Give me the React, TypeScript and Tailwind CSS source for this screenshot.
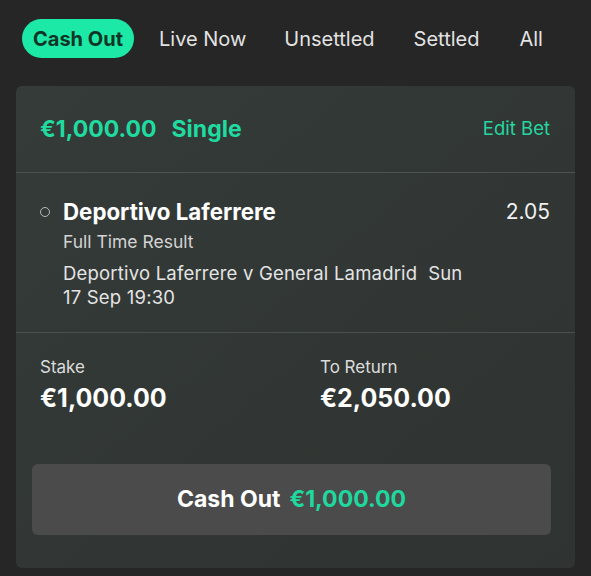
export default function App() {
  return (
    <div className="h-[576px] w-[591px] overflow-hidden bg-[#262626] font-['Inter',sans-serif] text-white">
      {/* Filter tabs */}
      <div className="flex items-center px-[22px] pt-[19px]">
        <div className="flex h-[39px] items-center rounded-full bg-[#1de9a6] px-[11px] text-[20px] font-bold text-[#0f3526]">
          Cash Out
        </div>
        <div className="ml-[25px] flex text-[20px] text-[#e2e2e2]">
          <span>Live Now</span>
          <span className="ml-[38px]">Unsettled</span>
          <span className="ml-[39px]">Settled</span>
          <span className="ml-[40px]">All</span>
        </div>
      </div>

      {/* Bet card */}
      <div className="mx-[16px] mt-[28px] flex h-[482px] flex-col rounded-[6px] bg-gradient-to-br from-[#343b38] to-[#2f3331]">
        <div className="flex h-[86px] items-center justify-between pl-[24px] pr-[25px]">
          <div className="flex gap-[15px] text-[23px] font-bold text-[#1fdba0]">
            <span>€1,000.00</span>
            <span>Single</span>
          </div>
          <span className="text-[18.5px] text-[#25d6a0]">Edit Bet</span>
        </div>
        <div className="h-[1px] bg-[#4d5351]" />

        <div className="flex pl-[24px] pr-[25px] pt-[22px] pb-[23px]">
          <div className="mt-[12px] h-[10px] w-[10px] shrink-0 rounded-full border border-[#b8b8b8]" />
          <div className="ml-[13px] flex-1">
            <div className="flex items-center justify-between">
              <span className="text-[22.3px] font-bold">Deportivo Laferrere</span>
              <span className="text-[21px] text-[#f0f0f0]">2.05</span>
            </div>
            <div className="mt-[1px] text-[17.5px] text-[#d4d4d4]">Full Time Result</div>
            <div className="mt-[5px] w-[415px] text-[18.5px] leading-[24px] tracking-[0.2px] text-[#e4e4e4]">
              Deportivo Laferrere v General Lamadrid&nbsp;&nbsp;Sun 17 Sep 19:30
            </div>
          </div>
        </div>
        <div className="h-[1px] bg-[#4a504e]" />

        <div className="flex pl-[24px] pt-[22px]">
          <div className="w-[280px]">
            <div className="text-[17px] text-[#dcdcdc]">Stake</div>
            <div className="text-[25px] font-bold">€1,000.00</div>
          </div>
          <div>
            <div className="text-[17px] text-[#dcdcdc]">To Return</div>
            <div className="text-[25px] font-bold">€2,050.00</div>
          </div>
        </div>

        <div className="ml-[16px] mr-[24px] mt-[46px] flex h-[71px] items-center justify-center gap-[9px] rounded-[6px] bg-[#4b4b4b] text-[23px] font-bold">
          <span>Cash Out</span>
          <span className="text-[#1fd89e]">€1,000.00</span>
        </div>
      </div>
    </div>
  )
}
